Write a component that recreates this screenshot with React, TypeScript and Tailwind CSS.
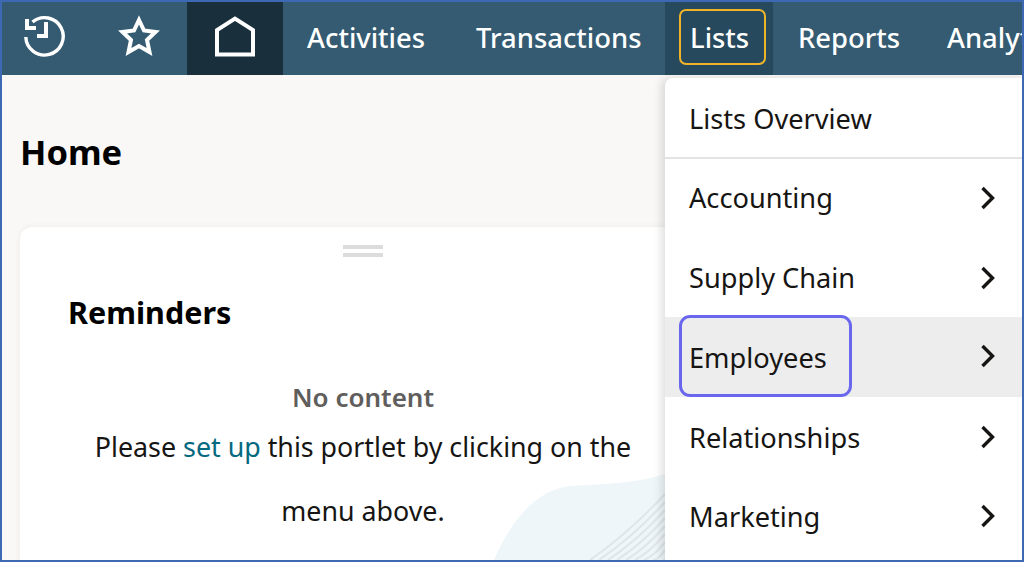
const font = "font-['Noto_Sans','Open_Sans',sans-serif]";

function NavLink({ label, className = "" }: { label: string; className?: string }) {
    return <div className={`flex h-full shrink-0 items-center pb-[2px] text-[27.4px] font-medium text-white ${className}`}>{label}</div>;
}

function Chevron() {
    return (
        <svg className="-mt-[2px]" width="16" height="24" viewBox="0 0 16 24" fill="none" stroke="#161513" strokeWidth="3.4">
            <path d="M2.5 2 L12.5 12 L2.5 22" />
        </svg>
    );
}

function MenuRow({ label, active, className = "h-[80px]" }: { label: string; active?: boolean; className?: string }) {
    return (
        <div className={`flex items-center justify-between pl-[24px] pr-[29px] ${className} ${active ? "bg-[#ededed]" : ""}`}>
            {active ? (
                <span className="-ml-[10px] mb-[2px] flex h-[82px] w-[173px] shrink-0 items-center rounded-[11px] border-[3px] border-[#6a67ee] pt-[4px] pl-[7px]">{label}</span>
            ) : (
                <span>{label}</span>
            )}
            <Chevron />
        </div>
    );
}

const ridges = [0, 1, 2, 3, 4, 5, 6, 7, 8];

export default function App() {
    return (
        <div className={`${font} relative h-[562px] w-[1024px] overflow-hidden border-2 border-[#3d68b4] bg-[#f9f8f6] text-[#161513]`}>
            <nav className="flex h-[73px] items-center overflow-hidden bg-[#345b72]">
                <div className="flex h-full w-[91px] shrink-0 items-center justify-center pr-[8px] pb-[5px]">
                    <svg width="42" height="42" viewBox="0 0 42 42" fill="none" stroke="white" strokeWidth="3.4">
                        <path d="M2.8 22 A18.7 18.7 0 1 0 9.5 7" />
                        <path d="M4 4 V13 H13" strokeWidth="4" />
                        <path d="M23 7 V21 H14" strokeWidth="4" />
                    </svg>
                </div>
                <div className="flex h-full w-[94px] shrink-0 items-center justify-center pr-[2px] pb-[5px]">
                    <svg width="42" height="42" viewBox="0 0 42 42" fill="none" stroke="white" strokeWidth="4">
                        <path d="M21 5 L26 15.5 L37.5 17 L29 25 L31.5 37 L21 31 L10.5 37 L13 25 L4.5 17 L16 15.5 Z" />
                    </svg>
                </div>
                <div className="flex h-full w-[96px] shrink-0 items-center justify-center bg-[#1a2f3c] pb-[5px]">
                    <svg width="42" height="42" viewBox="0 0 42 42" fill="none" stroke="white" strokeWidth="4">
                        <path d="M3 39.5 V15 L21 3.5 L39 15 V39.5 Z" />
                    </svg>
                </div>
                <NavLink label="Activities" className="ml-[24px] w-[120px]" />
                <NavLink label="Transactions" className="ml-[49px] w-[165px]" />
                <div className="ml-[24px] flex h-full w-[108px] shrink-0 items-center bg-[#26495d] pb-[4px] pl-[14px]">
                    <span className="flex h-[56px] w-[87px] items-center rounded-[7px] border-2 border-[#f0b429] pt-[2px] pl-[9px] text-[27.4px] font-medium text-white">Lists</span>
                </div>
                <NavLink label="Reports" className="ml-[25px] w-[100px]" />
                <NavLink label="Analytics" className="ml-[49px]" />
            </nav>

            <main className="relative h-[485px] overflow-hidden pl-[18px]">
                <h1 className="pt-[54px] text-[34.5px] leading-[46px] font-bold text-black">Home</h1>
                <section className="relative mt-[52px] h-[400px] w-[700px] overflow-hidden rounded-t-[12px] bg-white pt-[18px] pl-[48px] shadow-[0_0_6px_rgba(0,0,0,0.06)]">
                    <svg className="absolute left-[465px] top-[245px]" width="180" height="90" viewBox="0 0 180 90" fill="none">
                        <path d="M8 90 C25 50 50 18 85 14 C115 12 150 12 180 2 V90 Z" fill="#eff6f9" />
                        <g stroke="#dfe5e8" strokeWidth="2">
                            {ridges.map((i) => (
                                <path key={i} d={`M${105 + i * 9} 88 Q${145 + i * 4} ${60 + i * 4} 180 ${22 + i * 8}`} />
                            ))}
                        </g>
                    </svg>
                    <div className="mb-[9px] ml-[275px] flex w-[40px] flex-col gap-[4px]">
                        <div className="h-[4px] bg-[#dcdcdc]" />
                        <div className="h-[4px] bg-[#dcdcdc]" />
                    </div>
                    <h2 className="pt-[26px] text-[30.5px] leading-[40px] font-bold text-black">Reminders</h2>
                    <div className="relative -ml-[48px] w-[686px] pt-[45px] text-center">
                        <div className="text-[26px] leading-[40px] font-semibold text-[#5f5e5c]">No content</div>
                        <p className="mx-auto -mt-[2px] w-[560px] text-[26.8px] leading-[64px]">
                            Please <span className="text-[#04697f]">set up</span> this portlet by clicking on the menu above.
                        </p>
                    </div>
                </section>
                <div className="absolute top-[3px] left-[663px] h-[483px] w-[360px] rounded-tl-[8px] bg-white text-[27.2px] shadow-[-4px_0_8px_rgba(0,0,0,0.12)]">
                    <div className="flex h-[81px] items-center border-b-2 border-[#e4e3e1] pt-[3px] pl-[24px]">Lists Overview</div>
                    <MenuRow label="Accounting" className="h-[79px]" />
                    <MenuRow label="Supply Chain" className="h-[79px] pt-[2px]" />
                    <MenuRow label="Employees" active />
                    <MenuRow label="Relationships" className="h-[80px] pt-[2px]" />
                    <MenuRow label="Marketing" />
                </div>
            </main>
        </div>
    );
}
